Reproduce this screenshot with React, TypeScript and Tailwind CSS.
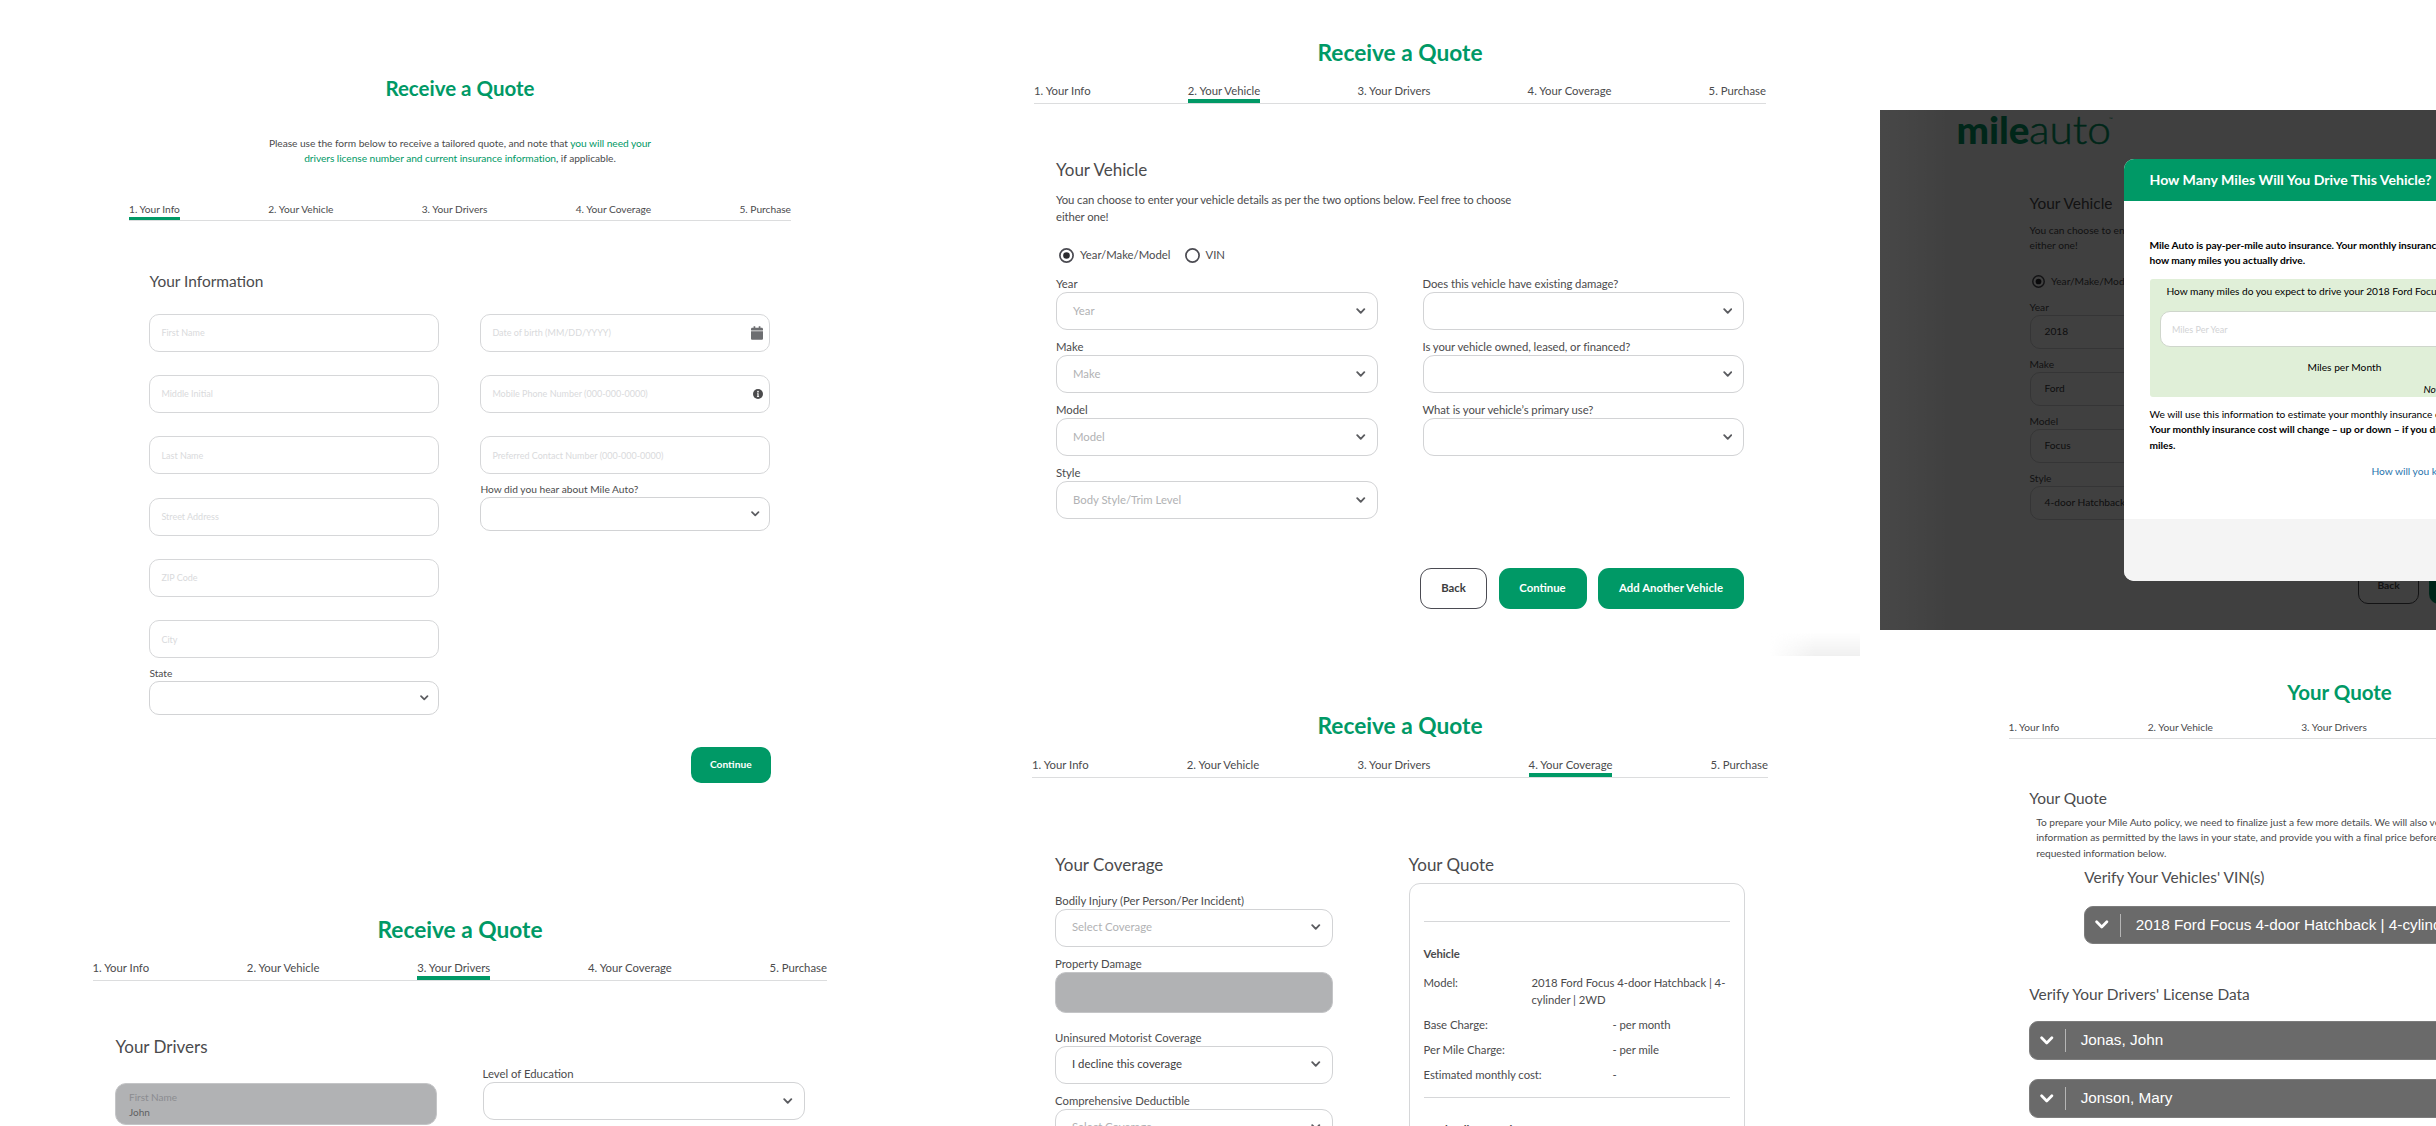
import { clsx } from "clsx";
import type { ReactNode } from "react";

const STEPS = [
  "1. Your Info",
  "2. Your Vehicle",
  "3. Your Drivers",
  "4. Your Coverage",
  "5. Purchase",
];

const Chevron = ({ className }: { className?: string }) => (
  <svg
    className={clsx("shrink-0", className)}
    fill="none"
    viewBox="0 0 10 7"
    stroke="currentColor"
    strokeWidth={2}
  >
    <path strokeLinecap="round" strokeLinejoin="round" d="M1.2 1.3L5 5.2l3.8-3.9" />
  </svg>
);

const CalendarIcon = () => (
  <svg className="h-[14px] w-[12px]" viewBox="0 0 448 512" fill="#6d6e71">
    <path d="M12 192h424c6.600 0 12 5.400 12 12v260c0 26.500-21.500 48-48 48H48c-26.500 0-48-21.500-48-48V204c0-6.600 5.400-12 12-12zm436-44v-36c0-26.500-21.500-48-48-48h-48V12c0-6.600-5.400-12-12-12h-40c-6.600 0-12 5.400-12 12v52H160V12c0-6.600-5.400-12-12-12h-40c-6.600 0-12 5.400-12 12v52H48C21.500 64 0 85.500 0 112v36c0 6.600 5.400 12 12 12h424c6.600 0 12-5.400 12-12z" />
  </svg>
);

const InfoIcon = () => (
  <svg className="h-[10px] w-[10px]" viewBox="0 0 10 10">
    <circle cx="5" cy="5" r="5" fill="#4b4b4d" />
    <circle cx="5" cy="2.700" r="0.850" fill="white" />
    <path d="M4.100 4.200h1.500v3h.500v.800H3.900v-.800h.500V5h-.300z" fill="white" />
  </svg>
);

const Title = ({ small, children }: { small?: boolean; children: ReactNode }) => (
  <h1
    className={clsx(
      "text-center font-bold text-[#009966] whitespace-nowrap",
      small ? "text-[20.5px] leading-[24px]" : "text-[22.7px] leading-[26px]",
    )}
  >
    {children}
  </h1>
);

const Steps = ({
  active,
  small,
  className,
}: {
  active?: number;
  small?: boolean;
  className?: string;
}) => (
  <div
    className={clsx(
      "flex justify-between border-b border-[#dcddde] whitespace-nowrap",
      small ? "text-[10.2px] leading-[15px]" : "text-[11.33px] leading-[16px]",
      className,
    )}
  >
    {STEPS.map((step, i) => (
      <div
        key={step}
        className={clsx(
          small ? "border-b-3" : "border-b-4",
          i + 1 === active ? "border-[#009966]" : "border-transparent",
        )}
      >
        {step}
      </div>
    ))}
  </div>
);

const Heading = ({
  small,
  className,
  children,
}: {
  small?: boolean;
  className?: string;
  children: ReactNode;
}) => (
  <h2
    className={clsx(
      "whitespace-nowrap",
      small ? "text-[15.45px] leading-[20px]" : "text-[17px] leading-[22px]",
      className,
    )}
  >
    {children}
  </h2>
);

const TextInput = ({ placeholder, icon }: { placeholder: string; icon?: ReactNode }) => (
  <div className="flex h-[38px] items-center justify-between rounded-[10px] border border-[#d6d7d9] pr-[6px] pl-[11px] text-[9px] text-[#d9dadc]">
    <span>{placeholder}</span>
    {icon}
  </div>
);

const SelectField = ({
  label,
  value,
  muted,
  small,
}: {
  label: string;
  value?: string;
  muted?: boolean;
  small?: boolean;
}) => (
  <div>
    <div
      className={clsx(
        "whitespace-nowrap",
        small ? "text-[10.2px] leading-[15px]" : "text-[11.33px] leading-[16px]",
      )}
    >
      {label}
    </div>
    <div
      className={clsx(
        "flex items-center justify-between border border-[#d2d3d5]",
        small
          ? "h-[34px] rounded-[10px] pr-[9.5px] pl-[14px] text-[10.2px]"
          : "h-[38px] rounded-[11px] pr-[11px] pl-[16px] text-[11.33px]",
        muted ? "text-[#b1b2b4]" : "text-[#3c3c3e]",
      )}
    >
      <span className="whitespace-nowrap">{value}</span>
      <Chevron
        className={clsx("text-[#5b5c60]", small ? "h-[6px] w-[8.5px]" : "h-[6.5px] w-[9.5px]")}
      />
    </div>
  </div>
);

const Radio = ({ checked, small }: { checked?: boolean; small?: boolean }) => (
  <svg className={small ? "h-[13px] w-[13px]" : "h-[15px] w-[15px]"} viewBox="0 0 15 15">
    <circle cx="7.5" cy="7.5" r="6.600" fill="none" stroke="#4b4b52" strokeWidth="1.700" />
    {checked && <circle cx="7.5" cy="7.5" r="3.300" fill="#2b2b2f" />}
  </svg>
);

const InfoScreen = () => (
  <section className="w-[920px] pt-[76px]">
    <Title small>Receive a Quote</Title>
    <p className="mx-auto mt-[35.5px] w-[400px] text-center text-[10.2px] leading-[15.33px] tracking-[-0.045px]">
      Please use the form below to receive a tailored quote, and note that{" "}
      <span className="text-[#009966]">you will need your</span>
      <br />
      <span className="text-[#009966]">
        drivers license number and current insurance information
      </span>
      , if applicable.
    </p>
    <Steps small active={1} className="mt-[35.5px] ml-[129px] w-[662px]" />
    <Heading small className="mt-[50px] ml-[149.5px]">
      Your Information
    </Heading>
    <div className="mt-[23px] ml-[149.4px] grid w-[621px] grid-cols-[290px_290px] items-start gap-x-[41px]">
      <div>
        <div className="flex flex-col gap-[23.33px]">
          <TextInput placeholder="First Name" />
          <TextInput placeholder="Middle Initial" />
          <TextInput placeholder="Last Name" />
          <TextInput placeholder="Street Address" />
          <TextInput placeholder="ZIP Code" />
          <TextInput placeholder="City" />
        </div>
        <div className="mt-[8px]">
          <SelectField small label="State" />
        </div>
      </div>
      <div>
        <div className="flex flex-col gap-[23.33px]">
          <TextInput placeholder="Date of birth (MM/DD/YYYY)" icon={<CalendarIcon />} />
          <TextInput placeholder="Mobile Phone Number (000-000-0000)" icon={<InfoIcon />} />
          <TextInput placeholder="Preferred Contact Number (000-000-0000)" />
        </div>
        <div className="mt-[8px]">
          <SelectField small label="How did you hear about Mile Auto?" />
        </div>
      </div>
    </div>
    <button className="mt-[31.5px] ml-[691px] block h-[36px] w-[79.5px] rounded-[10px] bg-[#009966] text-[10.2px] font-bold text-white">
      Continue
    </button>
  </section>
);

const DriversScreen = () => (
  <section className="w-[920px] pt-[134px]">
    <Title>Receive a Quote</Title>
    <Steps active={3} className="mt-[17.5px] ml-[92.500px] w-[734.5px]" />
    <Heading className="mt-[55px] ml-[115.500px]">Your Drivers</Heading>
    <div className="mt-[8px] ml-[115px] grid grid-cols-[322px_322px] items-start gap-x-[45.500px]">
      <div className="mt-[17px] h-[42px] rounded-[11px] border border-[#c4c5c7] bg-[#b1b2b4] pt-[6px] pl-[13px] text-[10px] leading-[14.5px] text-[#8b8c90]">
        First Name
        <div className="text-[#5e5f62]">John</div>
      </div>
      <SelectField label="Level of Education" />
    </div>
  </section>
);

const VehicleScreen = () => (
  <section className="pt-[39.5px]">
    <Title>Receive a Quote</Title>
    <Steps active={2} className="mx-auto mt-[17px] w-[732px]" />
    <div className="mx-auto w-[688px]">
      <Heading className="mt-[55.5px]">Your Vehicle</Heading>
      <p className="mt-[10px] text-[11.33px] leading-[17px] tracking-[-0.1px]">
        You can choose to enter your vehicle details as per the two options below. Feel free to choose
        <br />
        either one!
      </p>
      <div className="mt-[22.5px] flex h-[16px] items-center pl-[3px] text-[11.33px]">
        <Radio checked />
        <span className="ml-[6px]">Year/Make/Model</span>
        <span className="ml-[14px]">
          <Radio />
        </span>
        <span className="ml-[6px]">VIN</span>
      </div>
      <div className="mt-[12.500px] grid grid-cols-[321.5px_321.5px] items-start justify-between">
        <div className="flex flex-col gap-[9px]">
          <SelectField muted label="Year" value="Year" />
          <SelectField muted label="Make" value="Make" />
          <SelectField muted label="Model" value="Model" />
          <SelectField muted label="Style" value="Body Style/Trim Level" />
        </div>
        <div className="flex flex-col gap-[9px] tracking-[-0.06px]">
          <SelectField label="Does this vehicle have existing damage?" />
          <SelectField label="Is your vehicle owned, leased, or financed?" />
          <SelectField label="What is your vehicle’s primary use?" />
        </div>
      </div>
      <div className="mt-[49px] flex justify-end gap-[11.5px] text-[11.33px] font-bold text-white">
        <button className="h-[41px] w-[67px] rounded-[11px] border border-[#4b4b52] text-[#3c3c3e]">
          Back
        </button>
        <button className="h-[41px] w-[88px] rounded-[11px] bg-[#009966]">Continue</button>
        <button className="h-[41px] w-[146px] rounded-[11px] bg-[#009966] tracking-[0.04px]">
          Add Another Vehicle
        </button>
      </div>
    </div>
  </section>
);

const CoverageScreen = () => (
  <section className="pt-[103.5px]">
    <Title>Receive a Quote</Title>
    <Steps active={4} className="mx-auto mt-[18px] w-[736px]" />
    <div className="mx-auto mt-[76.500px] flex w-[690px] justify-between">
      <div className="w-[277.5px]">
        <Heading>Your Coverage</Heading>
        <div className="mt-[16.500px] flex flex-col gap-[9px]">
          <SelectField muted label="Bodily Injury (Per Person/Per Incident)" value="Select Coverage" />
          <div className="text-[11.33px] leading-[16px]">
            Property Damage
            <div className="h-[41px] rounded-[11px] border border-[#c4c5c7] bg-[#b1b2b4]" />
          </div>
          <div className="mt-[8px]">
            <SelectField label="Uninsured Motorist Coverage" value="I decline this coverage" />
          </div>
          <SelectField muted label="Comprehensive Deductible" value="Select Coverage" />
        </div>
      </div>
      <div className="w-[336.5px]">
        <Heading>Your Quote</Heading>
        <div className="mt-[7px] h-[400px] rounded-[11px] border border-[#d6d7d9] px-[14px] pt-[37px] text-[11.33px] leading-[17px] tracking-[-0.05px] whitespace-nowrap">
          <hr className="border-[#d6d7d9]" />
          <div className="mt-[22.500px] font-bold">Vehicle</div>
          <div className="mt-[12px] flex">
            <span className="w-[108px]">Model:</span>
            <span>
              2018 Ford Focus 4-door Hatchback | 4-
              <br />
              cylinder | 2WD
            </span>
          </div>
          <div className="mt-[8px] grid grid-cols-[189px_1fr] gap-y-[8.3px]">
            <span>Base Charge:</span>
            <span>- per month</span>
            <span>Per Mile Charge:</span>
            <span>- per mile</span>
            <span>Estimated monthly cost:</span>
            <span>-</span>
          </div>
          <hr className="mt-[13.5px] border-[#d6d7d9]" />
          <div className="mt-[23px] font-bold">Total Policy Premium</div>
        </div>
      </div>
    </div>
  </section>
);

const MilesModal = () => (
  <div className="absolute top-[49px] left-[244px] flex h-[422px] w-[600px] flex-col overflow-hidden rounded-[10px] bg-white text-[10.2px] leading-[15.33px] whitespace-nowrap text-black">
    <div className="flex h-[42px] shrink-0 items-center bg-[#009966] pl-[25.5px] text-[14.1px] font-bold text-white">
      How Many Miles Will You Drive This Vehicle?
    </div>
    <div className="h-[318px] shrink-0 pt-[36.500px] pl-[25.5px]">
      <p className="font-bold tracking-[-0.03px]">
        Mile Auto is pay-per-mile auto insurance. Your monthly insurance cost will depend on
        <br />
        how many miles you actually drive.
      </p>
      <div className="mt-[10.5px] h-[118px] rounded-[3px] bg-[#e0efd8] pt-[5px] pl-[10.5px]">
        <p className="pl-[6.5px] tracking-[-0.03px]">
          How many miles do you expect to drive your 2018 Ford Focus?
        </p>
        <div className="mt-[12px] flex h-[36.500px] items-center rounded-[10px] border border-[#cfd6cc] bg-white pl-[11px] text-[9px] text-[#d2d3d5]">
          Miles Per Year
        </div>
        <p className="mt-[12.5px] pl-[147.5px]">Miles per Month</p>
        <p className="mt-[6.5px] pl-[263.5px] italic">Note: this is an estimate</p>
      </div>
      <p className="mt-[10.5px] tracking-[-0.02px]">
        We will use this information to estimate your monthly insurance cost.
        <br />
        <span className="font-bold">
          Your monthly insurance cost will change – up or down – if you drive more or fewer
          <br />
          miles.
        </span>
      </p>
      <p className="mt-[10.5px] pl-[222px] text-[#1f74ad]">How will you know my mileage?</p>
    </div>
    <div className="grow bg-[#f4f4f4]" />
  </div>
);

const MilesScreen = () => (
  <section className="relative ml-[20px] h-[520px] overflow-hidden bg-white">
    <svg className="mt-[4px] ml-[76px] block h-[36px] w-[160px] overflow-visible" fill="#009966">
      <text x="0.5" y="30" fontSize="37" fontWeight="900" textLength="73" lengthAdjust="spacingAndGlyphs">
        mile
      </text>
      <text
        x="73"
        y="30"
        fontSize="39"
        fontWeight="300"
        stroke="#009966"
        strokeWidth="0.5"
        textLength="82"
        lengthAdjust="spacingAndGlyphs"
      >
        auto
      </text>
      <text x="153" y="7" fontSize="5">
        ™
      </text>
    </svg>
    <div className="ml-[149.5px] w-[600px]">
      <Heading small className="pt-[43px]">
        Your Vehicle
      </Heading>
      <p className="mt-[10px] text-[10.2px] leading-[15.33px]">
        You can choose to enter your vehicle details as per the two options below.
        <br />
        either one!
      </p>
      <div className="mt-[20px] flex h-[15px] items-center pl-[2.500px] text-[10.2px]">
        <Radio small checked />
        <span className="ml-[6px]">Year/Make/Model</span>
      </div>
      <div className="mt-[11px] flex w-[290px] flex-col gap-[8px]">
        <SelectField small label="Year" value="2018" />
        <SelectField small label="Make" value="Ford" />
        <SelectField small label="Model" value="Focus" />
        <SelectField small label="Style" value="4-door Hatchback | 4-cylinder" />
      </div>
      <div className="mt-[47px] flex gap-[10px] pl-[328.500px] text-[10.2px] font-bold">
        <button className="h-[37px] w-[61px] rounded-[10px] border border-[#4b4b52]">Back</button>
        <button className="h-[37px] w-[80px] rounded-[10px] bg-[#009966]" />
      </div>
    </div>
    {/* dimmed backdrop, slightly lighter along its left side */}
    <div className="absolute inset-0 bg-black/75" />
    <div className="absolute inset-y-0 left-0 w-[70px] bg-linear-to-r from-white/4 to-white/0" />
    <MilesModal />
  </section>
);

const AccordionBar = ({ className, children }: { className?: string; children: ReactNode }) => (
  <div
    className={clsx(
      "flex h-[38.500px] items-center rounded-[9px] border border-[#7c7c7c] bg-[#6a6a6a] pl-[10px] font-['Liberation_Sans',sans-serif] text-[15.3px] whitespace-nowrap text-white",
      className,
    )}
  >
    <Chevron className="h-[9.5px] w-[13.5px]" />
    <span className="mr-[15px] ml-[11px] h-[23px] w-px bg-[#b5b5b5]" />
    {children}
  </div>
);

const QuoteScreen = () => (
  <section className="w-[960px] pt-[50px]">
    <div className="ml-[148.500px] w-[662px]">
      <Title small>Your Quote</Title>
      <Steps small className="mt-[15.500px]" />
      <div className="pl-[20.700px]">
        <Heading small className="mt-[49px]">
          Your Quote
        </Heading>
        <p className="mt-[7.500px] pl-[7px] text-[10.2px] leading-[15.33px] tracking-[-0.04px] whitespace-nowrap">
          To prepare your Mile Auto policy, we need to finalize just a few more details. We will also verify
          <br />
          information as permitted by the laws in your state, and provide you with a final price before purchase
          <br />
          requested information below.
        </p>
        <Heading small className="mt-[6px] ml-[55px]">
          Verify Your Vehicles' VIN(s)
        </Heading>
        <AccordionBar className="mt-[19px] ml-[55px]">
          2018 Ford Focus 4-door Hatchback | 4-cylinder | 2WD
        </AccordionBar>
        <Heading small className="mt-[39.500px]">
          Verify Your Drivers' License Data
        </Heading>
        <AccordionBar className="mt-[17.500px]">Jonas, John</AccordionBar>
        <AccordionBar className="mt-[19.500px]">Jonson, Mary</AccordionBar>
      </div>
    </div>
  </section>
);

export default function App() {
  return (
    <main className="flex h-[1126px] w-[2436px] overflow-hidden bg-white font-[Lato,sans-serif] text-[#4b4b4d]">
      <div className="w-[940px] shrink-0">
        <InfoScreen />
        <DriversScreen />
      </div>
      <div className="relative w-[920px] shrink-0">
        <VehicleScreen />
        <div className="absolute top-[632px] right-0 h-[24px] w-[90px] bg-linear-to-b from-transparent to-[#f0f0f0] mask-l-from-50%" />
        <CoverageScreen />
      </div>
      <div className="w-[576px] shrink-0 overflow-hidden pt-[110px]">
        <MilesScreen />
        <QuoteScreen />
      </div>
    </main>
  );
}
